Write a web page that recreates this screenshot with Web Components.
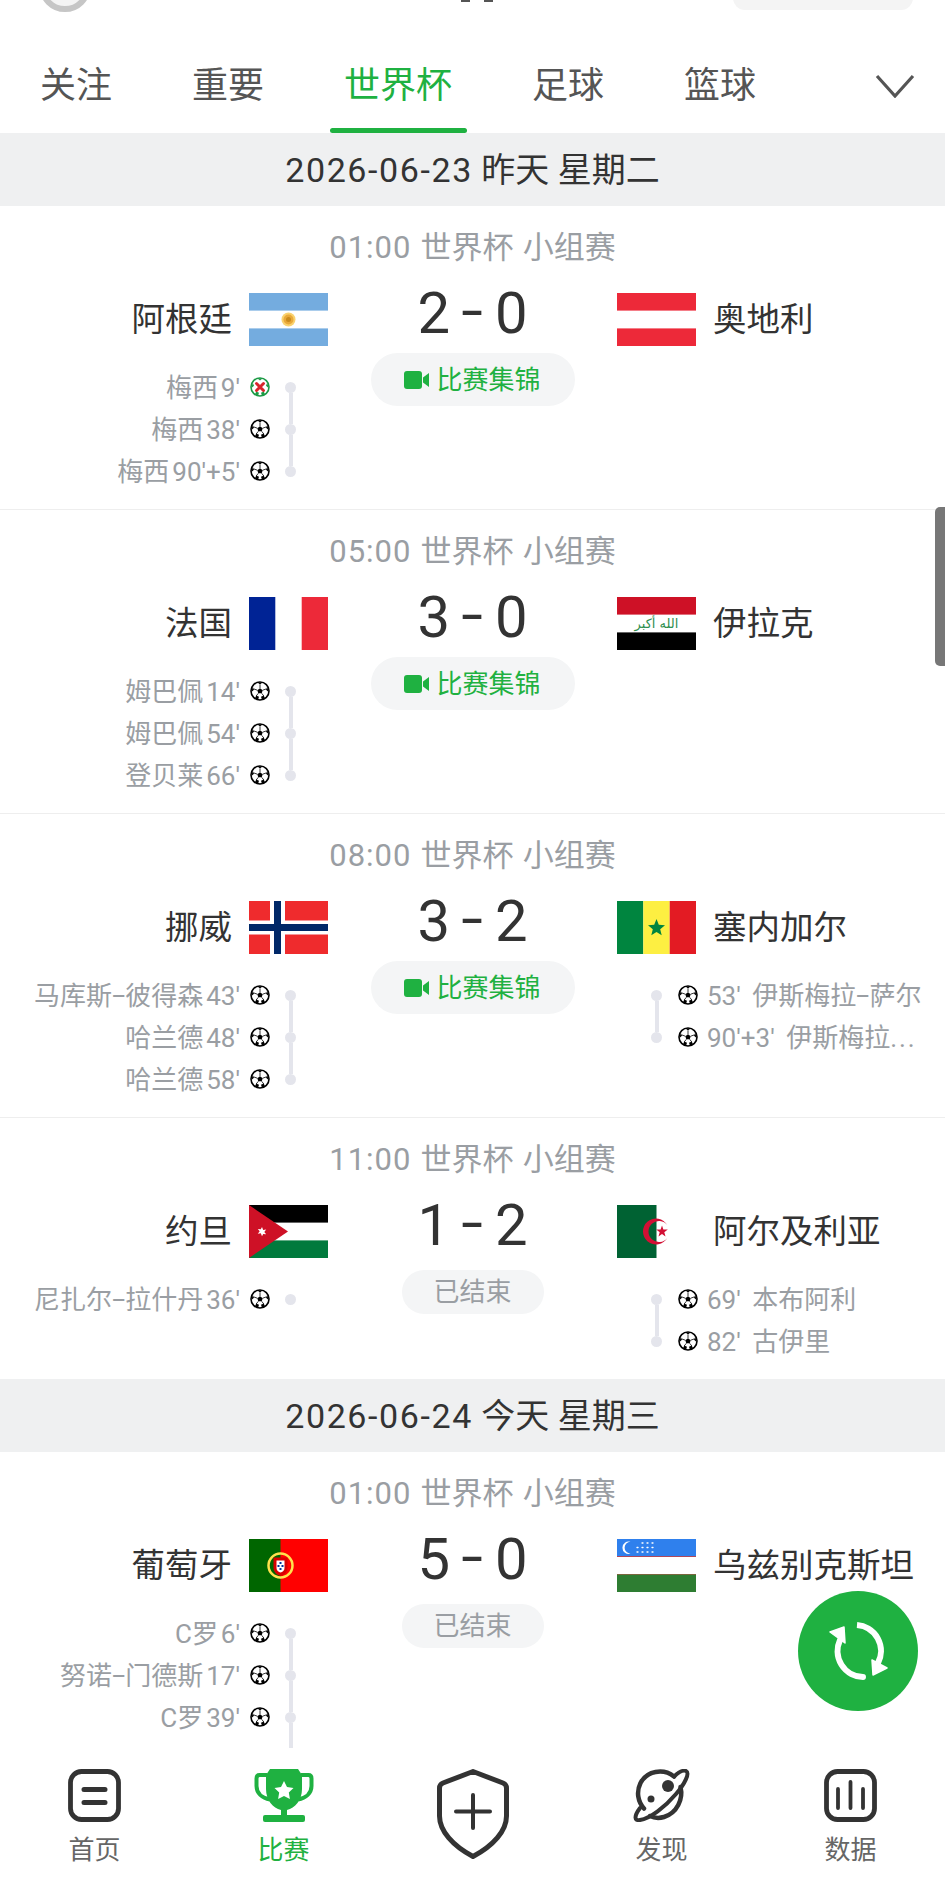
<!DOCTYPE html>
<html lang="zh">
<head>
<meta charset="utf-8">
<title>比赛</title>
<style>
    html, body { margin: 0; background: #fff; }
    body { font-family: Roboto, "Noto Sans CJK SC", sans-serif; color: #333; }
</style>
</head>
<body>
<score-app>
    <top-stub slot="top"></top-stub>
    <tab-bar slot="top">
        <tab-item>关注</tab-item>
        <tab-item>重要</tab-item>
        <tab-item active>世界杯</tab-item>
        <tab-item>足球</tab-item>
        <tab-item>篮球</tab-item>
    </tab-bar>

    <date-band><span>2026-06-23</span> 昨天 星期二</date-band>

    <match-row clock="01:00" time="世界杯 小组赛" home="阿根廷" away="奥地利" home-flag="ar" away-flag="at" score="2 - 0" status="video">
        <goal-row slot="home" side="home" kind="penalty" text="梅西 9'"></goal-row>
        <goal-row slot="home" side="home" text="梅西 38'"></goal-row>
        <goal-row slot="home" side="home" text="梅西 90'+5'"></goal-row>
    </match-row>
    <match-row clock="05:00" time="世界杯 小组赛" home="法国" away="伊拉克" home-flag="fr" away-flag="iq" score="3 - 0" status="video">
        <goal-row slot="home" side="home" text="姆巴佩 14'"></goal-row>
        <goal-row slot="home" side="home" text="姆巴佩 54'"></goal-row>
        <goal-row slot="home" side="home" text="登贝莱 66'"></goal-row>
    </match-row>
    <match-row clock="08:00" time="世界杯 小组赛" home="挪威" away="塞内加尔" home-flag="no" away-flag="sn" score="3 - 2" status="video">
        <goal-row slot="home" side="home" text="马库斯-彼得森 43'"></goal-row>
        <goal-row slot="home" side="home" text="哈兰德 48'"></goal-row>
        <goal-row slot="home" side="home" text="哈兰德 58'"></goal-row>
        <goal-row slot="away" side="away" text="53' 伊斯梅拉-萨尔"></goal-row>
        <goal-row slot="away" side="away" text="90'+3' 伊斯梅拉..."></goal-row>
    </match-row>
    <match-row last clock="11:00" time="世界杯 小组赛" home="约旦" away="阿尔及利亚" home-flag="jo" away-flag="dz" score="1 - 2" status="done">
        <goal-row slot="home" side="home" text="尼扎尔-拉什丹 36'"></goal-row>
        <goal-row slot="away" side="away" text="69' 本布阿利"></goal-row>
        <goal-row slot="away" side="away" text="82' 古伊里"></goal-row>
    </match-row>

    <date-band><span>2026-06-24</span> 今天 星期三</date-band>

    <match-row last clock="01:00" time="世界杯 小组赛" home="葡萄牙" away="乌兹别克斯坦" home-flag="pt" away-flag="uz" score="5 - 0" status="done">
        <goal-row slot="home" side="home" text="C罗 6'"></goal-row>
        <goal-row slot="home" side="home" text="努诺-门德斯 17'"></goal-row>
        <goal-row slot="home" side="home" text="C罗 39'"></goal-row>
        <goal-row slot="home" side="home" text="" blank></goal-row>
    </match-row>

    <nav-bar slot="bottom">
        <nav-item label="首页">
            <svg slot="icon" width="53" height="53" viewBox="0 0 53 53" fill="none" stroke="#333" stroke-linecap="round">
                <rect x="2.500" y="2.500" width="48" height="48" rx="11" stroke-width="4.800"/>
                <path d="M16 20.500h21M16 33.500h21" stroke-width="5"/>
            </svg>
        </nav-item>
        <nav-item label="比赛" active>
            <svg slot="icon" width="60" height="53" viewBox="0 0 60 53">
                <path d="M13 6H5.500C3.500 6 2.500 7.500 2.500 9.500V17C2.500 24 8 29 16 30.500M47 6h7.500c2 0 3 1.500 3 3.500V17c0 7-5.500 12-13.500 13.500" fill="none" stroke="#1fb141" stroke-width="4"/>
                <path d="M16 0H44L48 6V20C48 31 41 39 33 41V47H27V41C19 39 12 31 12 20V6Z" fill="#1fb141"/>
                <rect x="9" y="46" width="42" height="7" rx="2" fill="#1fb141"/>
                <path d="M30 12l3 6 6.500 1-4.700 4.600 1.100 6.400-5.900-3.100-5.900 3.100 1.100-6.400L20.500 19l6.500-1Z" fill="#fff"/>
            </svg>
        </nav-item>
        <nav-item>
            <svg slot="icon" width="72" height="90" viewBox="0 0 72 90" fill="none" stroke="#333" stroke-linecap="round" stroke-linejoin="round">
                <path d="M36 2.500L66 14Q69.500 15.500 69.500 19V47C69.500 62 56 77 36 87.500C16 77 2.500 62 2.500 47V19Q2.500 15.500 6 14Z" stroke-width="5"/>
                <path d="M36 26V59M19 42.500H53" stroke-width="4"/>
            </svg>
        </nav-item>
        <nav-item label="发现">
            <svg slot="icon" width="57" height="53" viewBox="0 0 57 53" fill="none" stroke="#333" stroke-linecap="round">
                <path d="M41 7.500C30 -1 14 2 7.500 14C3 23 5 33 11 39.500" stroke-width="4.500"/>
                <path d="M47.500 18C50.500 30 44 44 31 48C26 49.500 21 49 17 47" stroke-width="4.500"/>
                <path d="M7 39C1 47 1 52 7 51C17 49.500 32 38 43 25C52 14.500 57 4 53 2C50.500 .8 46 3 41 7.500" stroke-width="4"/>
                <circle cx="35" cy="17" r="6" fill="#333" stroke="none"/>
                <circle cx="18" cy="30" r="3.500" fill="#333" stroke="none"/>
            </svg>
        </nav-item>
        <nav-item label="数据">
            <svg slot="icon" width="53" height="53" viewBox="0 0 53 53" fill="none" stroke="#333" stroke-linecap="round">
                <rect x="2.500" y="2.500" width="48" height="48" rx="11" stroke-width="4.800"/>
                <path d="M14 20V39M26.500 13V39M39 20V39" stroke-width="3.800"/>
            </svg>
        </nav-item>
    </nav-bar>

    <fab-refresh slot="over"></fab-refresh>
    <scroll-thumb slot="over"></scroll-thumb>
</score-app>

<script>
// Flag drawings keyed by country code, all on the same 79x53 box
const FLAGS = {
    ar: `<rect width="79" height="53" fill="#fff"/><rect width="79" height="17.600" fill="#74acdf"/><rect y="35.400" width="79" height="17.600" fill="#74acdf"/>
         <circle cx="39.500" cy="26.500" r="7" fill="#f6b40e" opacity=".6"/><circle cx="39.500" cy="26.500" r="5" fill="#e9a93a"/><circle cx="39.500" cy="26.500" r="2.500" fill="#c98a1b"/>`,
    at: `<rect width="79" height="53" fill="#ed2939"/><rect y="17.600" width="79" height="17.800" fill="#fff"/>`,
    fr: `<rect width="79" height="53" fill="#fff"/><rect width="26.300" height="53" fill="#002395"/><rect x="52.700" width="26.300" height="53" fill="#ed2939"/>`,
    iq: `<rect width="79" height="53" fill="#fff"/><rect width="79" height="17.600" fill="#ce1126"/><rect y="35.400" width="79" height="17.600" fill="#000"/>
         <text x="39.500" y="31" text-anchor="middle" font-size="13" font-family="'DejaVu Sans'" fill="#2f8f4e">الله أكبر</text>`,
    no: `<rect width="79" height="53" fill="#ef2b2d"/><rect x="21" width="15" height="53" fill="#fff"/><rect y="19.500" width="79" height="14" fill="#fff"/>
         <rect x="25" width="7" height="53" fill="#002868"/><rect y="23" width="79" height="7" fill="#002868"/>`,
    sn: `<rect width="26.300" height="53" fill="#00853f"/><rect x="26.300" width="26.400" height="53" fill="#fdef42"/><rect x="52.700" width="26.300" height="53" fill="#e31b23"/>
         <path d="M39.500 18l2.300 5.800 6.200.4-4.800 4 1.500 6-5.200-3.300-5.200 3.300 1.500-6-4.800-4 6.200-.4Z" fill="#00853f"/>`,
    jo: `<rect width="79" height="53" fill="#fff"/><rect width="79" height="17.600" fill="#000"/><rect y="35.400" width="79" height="17.600" fill="#007a3d"/>
         <path d="M0 0L39 26.500L0 53Z" fill="#ce1126"/><path d="M13 22l1.200 2.900 3-.4-1.900 2.400 1.900 2.400-3-.4L13 31.200l-1.200-2.900-3 .4 1.900-2.400-1.900-2.400 3 .4Z" fill="#fff"/>`,
    dz: `<rect width="79" height="53" fill="#fff"/><rect width="39.500" height="53" fill="#006233"/>
         <path d="M50.300 20.100A13 13 0 1 0 50.300 32.900A10.500 10.500 0 1 1 50.300 20.100Z" fill="#d21034"/>
         <path d="M45 20.500l1.400 4 4.400.1-3.500 2.600 1.200 4.200-3.500-2.400-3.500 2.400 1.200-4.200-3.500-2.600 4.400-.1Z" fill="#d21034"/>`,
    pt: `<rect width="79" height="53" fill="#f00"/><rect width="31.500" height="53" fill="#060"/>
         <circle cx="31.500" cy="26.500" r="12" fill="none" stroke="#ffe14d" stroke-width="2.500"/><path d="M24.500 18.500h14v10c0 5-3.500 7.500-7 8.500-3.500-1-7-3.500-7-8.500Z" fill="#d80000"/>
         <path d="M27.500 21.500h8v7.500c0 2.500-2 4-4 4.500-2-.5-4-2-4-4.500Z" fill="#fff"/><path d="M30.500 23h2v2h-2ZM28.500 26h2v2h-2ZM32.500 26h2v2h-2ZM30.500 29h2v2h-2Z" fill="#003399"/>`,
    uz: `<rect width="79" height="53" fill="#fff"/><rect width="79" height="17.300" fill="#2f80ed"/><rect y="17" width="79" height="1" fill="#b0485a"/>
         <rect y="35" width="79" height="1" fill="#c8504a"/><rect y="35.500" width="79" height="17.500" fill="#2e7d32"/>
         <path d="M13.500 2.800A6.200 6.200 0 1 0 13.500 14.600A5.300 5.300 0 1 1 13.500 2.800Z" fill="#fff"/>
         <path d="M25 4h1M30 4h1M35 4h1M20 8.500h1M25 8.500h1M30 8.500h1M35 8.500h1M20 13h1M25 13h1M30 13h1M35 13h1" stroke="#fff" stroke-width="1.300" stroke-linecap="round"/>`
};

// Small helper so every element builds its shadow root the same way
function shadow(el, html) {
    el.attachShadow({ mode: 'open' }).innerHTML = html;
}

class ScoreApp extends HTMLElement {
    constructor() {
        super();
        shadow(this, `
            <style>
                :host { display: flex; flex-direction: column; position: relative; width: 945px; height: 1880px; overflow: hidden; background: #fff; }
                .list { flex: 1; min-height: 0; overflow: hidden; }
                .over ::slotted(*) { position: absolute; }
            </style>
            <slot name="top"></slot>
            <div class="list"><slot></slot></div>
            <slot name="bottom"></slot>
            <div class="over"><slot name="over"></slot></div>
        `);
    }
}

// Only the bottom edge of the real header is left on screen
class TopStub extends HTMLElement {
    constructor() {
        super();
        shadow(this, `
            <style>
                :host { display: flex; justify-content: space-between; height: 40px; padding: 0 32px 0 39px; overflow: hidden; }
                .avatar { width: 52px; height: 52px; margin-top: -40px; box-sizing: border-box; border: 6px solid #c6c6c6; border-radius: 50%; background: #f4f4f4; }
                .title { display: flex; gap: 14px; height: 2px; margin-left: 130px; }
                .title i { width: 9px; background: #555; }
                .search { width: 180px; height: 30px; margin-top: -20px; border-radius: 12px; background: #f4f4f4; }
            </style>
            <div class="avatar"></div>
            <div class="title"><i></i><i></i></div>
            <div class="search"></div>
        `);
    }
}

class TabBar extends HTMLElement {
    constructor() {
        super();
        shadow(this, `
            <style>
                :host { display: flex; align-items: stretch; gap: 80px; height: 93px; padding-left: 40px; position: relative; box-sizing: border-box; }
                svg { position: absolute; left: 875px; top: 34px; }
            </style>
            <slot></slot>
            <svg width="40" height="24" viewBox="0 0 40 24" fill="none" stroke="#555" stroke-width="3.200"><path d="M2 2L20 22L38 2"/></svg>
        `);
    }
}

class TabItem extends HTMLElement {
    constructor() {
        super();
        shadow(this, `
            <style>
                :host { display: block; position: relative; font-size: 36px; line-height: 92px; color: #555; }
                :host([active]) { color: #1fb141; }
                :host([active])::after { content: ''; position: absolute; left: -14px; right: -15px; bottom: 0; height: 5px; border-radius: 3px; background: #1fb141; }
            </style>
            <slot></slot>
        `);
    }
}

class DateBand extends HTMLElement {
    constructor() {
        super();
        shadow(this, `
            <style>
                :host { display: block; height: 73px; line-height: 75px; text-align: center; background: #eff0f1; color: #333; font-size: 34px; }
                ::slotted(span) { letter-spacing: 1.600px; }
            </style>
            <slot></slot>
        `);
    }
}

class MatchRow extends HTMLElement {
    connectedCallback() {
        if (this.shadowRoot) return;
        const attr = (name) => this.getAttribute(name) || '';
        const [left, right] = attr('score').split(' - ');
        const status = attr('status') === 'video'
            ? `<div class="pill video">
                   <svg width="25" height="18" viewBox="0 0 25 18"><rect width="18" height="18" rx="3" fill="#1fb141"/><path d="M19 6.500L25 2V16L19 11.500Z" fill="#1fb141"/></svg>
                   <span>比赛集锦</span>
               </div>`
            : `<div class="pill done"><span>已结束</span></div>`;
        shadow(this, `
            <style>
                :host { display: block; box-sizing: border-box; border-bottom: 1px solid #eee; padding: 21px 0 17px; }
                :host([last]) { border-bottom: 0; }
                .time { height: 40px; line-height: 42px; margin-bottom: 26px; text-align: center; font-size: 31px; color: #9a9ea3; word-spacing: 1.500px; }
                .clock { letter-spacing: 1px; }
                .grid { display: grid; grid-template-columns: 328px 289px 328px; }
                .team { display: flex; align-items: center; gap: 17px; height: 53px; font-size: 33.500px; line-height: 56px; color: #333; white-space: nowrap; }
                .home .team { justify-content: flex-end; }
                .goals { display: flex; flex-direction: column; margin-top: 20px; }
                .middle { display: flex; flex-direction: column; align-items: center; margin-top: -10px; }
                .score { height: 60px; line-height: 60px; font-size: 58px; color: #333; white-space: pre; }
                .dash { display: inline-block; transform: translateY(-3px) scaleX(1.350); }
                .slot { display: flex; align-items: center; height: 53px; margin-top: 10px; }
                .pill { display: flex; align-items: center; justify-content: center; border-radius: 27px; background: #f4f5f6; white-space: nowrap; }
                .pill span { margin-top: -4px; }
                .video { gap: 7px; width: 204px; height: 53px; font-size: 26px; color: #1fb141; }
                .done { width: 142px; height: 44px; font-size: 26px; color: #9a9ea3; }
            </style>
            <div class="time"><span class="clock">${attr('clock')}</span> ${attr('time')}</div>
            <div class="grid">
                <div class="home">
                    <div class="team"><span>${attr('home')}</span><nation-flag code="${attr('home-flag')}"></nation-flag></div>
                    <div class="goals"><slot name="home"></slot></div>
                </div>
                <div class="middle">
                    <div class="score">${left} <span class="dash">-</span> ${right}</div>
                    <div class="slot">${status}</div>
                </div>
                <div class="away">
                    <div class="team"><nation-flag code="${attr('away-flag')}"></nation-flag><span>${attr('away')}</span></div>
                    <div class="goals"><slot name="away"></slot></div>
                </div>
            </div>
        `);
    }
}

class NationFlag extends HTMLElement {
    connectedCallback() {
        if (this.shadowRoot) return;
        shadow(this, `
            <style>:host { display: block; flex: none; width: 79px; height: 53px; } svg { display: block; }</style>
            <svg width="79" height="53" viewBox="0 0 79 53">${FLAGS[this.getAttribute('code')] || ''}</svg>
        `);
    }
}

// One scorer line, the rail on the inner side links the lines of a team together
class GoalRow extends HTMLElement {
    connectedCallback() {
        if (this.shadowRoot) return;
        const kind = this.getAttribute('kind') || 'goal';
        const ball = this.hasAttribute('blank') ? '' : `<ball-icon kind="${kind}"></ball-icon>`;
        // A rail only runs towards a neighbour of the same team
        const slot = this.getAttribute('slot');
        const sameTeam = (el) => el && el.getAttribute('slot') === slot;
        const up = sameTeam(this.previousElementSibling) ? 'on' : '';
        const down = sameTeam(this.nextElementSibling) ? 'on' : '';
        // Names use a longer dash than the font's hyphen and the ellipsis is spaced out
        const text = (this.getAttribute('text') || '')
            .replace(/([^\d'+])-/g, '$1<span class="dash">-</span>')
            .replace('...', '<span class="dots">...</span>');
        shadow(this, `
            <style>
                :host { display: flex; align-items: center; height: 42px; font-size: 26px; color: #9a9ea3; white-space: nowrap; }
                :host([side="home"]) { justify-content: flex-end; padding-right: 32px; }
                :host([side="home"]) .text { word-spacing: -3.500px; }
                :host([side="away"]) { flex-direction: row-reverse; justify-content: flex-end; padding-left: 34px; padding-right: 20px; }
                :host([side="away"]) .text { word-spacing: 5px; }
                .text { min-width: 0; margin-top: -3px; }
                .dash { display: inline-block; margin: 0 3px; transform: translateY(-1px) scaleX(1.800); }
                .dots { letter-spacing: 2px; }
                ball-icon { margin: 0 15px 0 10px; }
                :host([side="away"]) ball-icon { margin: 0 9px 0 16px; }
                .rail { display: flex; flex-direction: column; align-items: center; flex: none; width: 11px; height: 100%; }
                .rail i { flex: 1; width: 4px; }
                .rail i.on { background: #e4e5ec; }
                .dot { flex: none; width: 11px; height: 11px; border-radius: 50%; background: #e4e5ec; }
            </style>
            <span class="text">${text}</span>
            ${ball}
            <div class="rail"><i class="${up}"></i><div class="dot"></div><i class="${down}"></i></div>
        `);
    }
}

class BallIcon extends HTMLElement {
    connectedCallback() {
        if (this.shadowRoot) return;
        const penalty = this.getAttribute('kind') === 'penalty';
        const ink = penalty ? '#1c9a45' : '#000';
        const mark = penalty
            ? `<path d="M6.500 6.500L13.500 13.500M13.500 6.500L6.500 13.500" stroke="#d8262c" stroke-width="3" stroke-linecap="round"/>`
            : `<path d="M10 7.200L12.700 9.200 11.700 12.300H8.300L7.300 9.200Z" fill="#000"/>
               <path d="M10 7.200V3.500M12.700 9.200L16 8M11.700 12.300L13.800 15M8.300 12.300L6.200 15M7.300 9.200L4 8" stroke="#000" stroke-width=".8"/>`;
        shadow(this, `
            <style>:host { display: block; flex: none; width: 20px; height: 20px; } svg { display: block; }</style>
            <svg width="20" height="20" viewBox="0 0 20 20">
                <circle cx="10" cy="10" r="9" fill="#fff" stroke="${ink}" stroke-width="1.600"/>
                <path d="M7.500 1.500L10 3.500 12.500 1.500ZM17.300 5.500L16 8.800 18.500 11ZM15 17.500L13.800 14.600 11 15.800 12 18.700ZM5 17.500L6.200 14.600 9 15.800 8 18.700ZM2.700 5.500L4 8.800 1.500 11Z" fill="${ink}"/>
                ${mark}
            </svg>
        `);
    }
}

class NavBar extends HTMLElement {
    constructor() {
        super();
        shadow(this, `
            <style>
                :host { display: grid; grid-template-columns: repeat(5, 189px); height: 132px; background: #fff; position: relative; z-index: 1; }
            </style>
            <slot></slot>
        `);
    }
}

class NavItem extends HTMLElement {
    connectedCallback() {
        if (this.shadowRoot) return;
        const label = this.getAttribute('label');
        shadow(this, `
            <style>
                :host { display: flex; flex-direction: column; align-items: center; padding-top: 21px; font-size: 26px; color: #666; }
                :host([active]) { color: #1fb141; }
                ::slotted(svg) { display: block; }
                .label { height: 40px; line-height: 40px; margin-top: 8px; }
            </style>
            <slot name="icon"></slot>
            ${label ? `<div class="label">${label}</div>` : ''}
        `);
    }
}

class FabRefresh extends HTMLElement {
    constructor() {
        super();
        shadow(this, `
            <style>
                :host { display: flex; align-items: center; justify-content: center; left: 798px; top: 1591px; width: 120px; height: 120px; border-radius: 50%; background: #1fb141; z-index: 2; }
            </style>
            <svg width="60" height="60" viewBox="0 0 60 60" fill="none">
                <path d="M29 4A26 26 0 0 1 50 42" stroke="#fff" stroke-width="6"/>
                <path d="M35 56A26 26 0 0 1 12 19" stroke="#fff" stroke-width="6" stroke-linecap="round"/>
                <path d="M44 39L59 47 45 54Z M2 11L16 6 17 22Z" fill="#fff" stroke="#fff" stroke-width="1.500" stroke-linejoin="round"/>
            </svg>
        `);
    }
}

class ScrollThumb extends HTMLElement {
    constructor() {
        super();
        shadow(this, `
            <style>
                :host { display: block; left: 935px; top: 507px; width: 10px; height: 159px; border-radius: 5px 0 0 5px; background: #777; z-index: 2; }
            </style>
        `);
    }
}

customElements.define('nation-flag', NationFlag);
customElements.define('ball-icon', BallIcon);
customElements.define('goal-row', GoalRow);
customElements.define('match-row', MatchRow);
customElements.define('date-band', DateBand);
customElements.define('tab-item', TabItem);
customElements.define('tab-bar', TabBar);
customElements.define('top-stub', TopStub);
customElements.define('nav-item', NavItem);
customElements.define('nav-bar', NavBar);
customElements.define('fab-refresh', FabRefresh);
customElements.define('scroll-thumb', ScrollThumb);
customElements.define('score-app', ScoreApp);
</script>
</body>
</html>
